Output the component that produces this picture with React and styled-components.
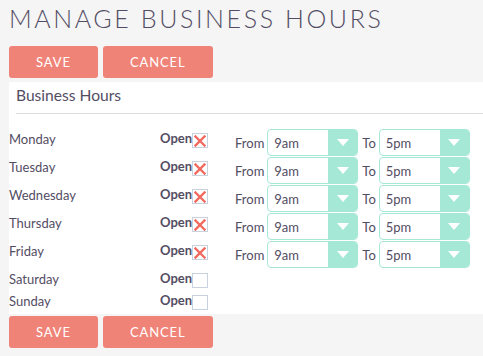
import React from 'react';
import styled, { createGlobalStyle } from 'styled-components';

const Global = createGlobalStyle`
  body {
    margin: 0;
    background: #f5f5f5;
    font-family: Lato, "Open Sans", sans-serif;
    color: #534d64;
  }
`

const Page = styled.div`
  padding: 3px 0 0 9px;
`

const Title = styled.h1`
  margin: 0 0 13px;
  font-size: 25px;
  line-height: 30px;
  font-weight: 300;
  letter-spacing: 2.6px;
  color: #534d64;
`

const Buttons = styled.div`
  display: flex;
  gap: 5px;
`

const Button = styled.button`
  height: 32px;
  padding: 0 27px;
  border: none;
  border-radius: 3px;
  background: #f08377;
  color: #fff;
  font-family: Lato, sans-serif;
  font-size: 13px;
  letter-spacing: 0.9px;
  cursor: pointer;
`

const Panel = styled.div`
  background: #fff;
  margin: 4px 0 2px;
  padding: 3px 0 1px;
`

const Heading = styled.h2`
  margin: 0 0 0 7px;
  padding-bottom: 8px;
  border-bottom: 1px solid #dcdcdc;
  font-size: 15.6px;
  line-height: 20px;
  font-weight: 400;
`

const Rows = styled.div`
  padding-top: 15px;
`

const Row = styled.div`
  display: flex;
  align-items: flex-start;
  height: ${p => (p.open ? 28 : 22)}px;
`

const Day = styled.div`
  width: 151px;
  font-size: 13px;
  line-height: 17px;
  padding-top: 2px;
`

const OpenCell = styled.div`
  width: 48px;
  display: flex;
  align-items: flex-start;
  font-size: 13px;
  line-height: 17px;
  font-weight: 700;
  padding-top: 1px;
`

const Check = styled.span`
  width: 15px;
  height: 13px;
  margin-top: 3px;
  border: 1px solid #c8d2de;
  background: #fff;
  display: flex;
  align-items: center;
  justify-content: center;
`

const Times = styled.div`
  margin-left: 27px;
  display: flex;
  align-items: center;
  height: 27px;
  font-size: 13px;
`

const Label = styled.span`
  margin-right: ${p => p.gap}px;
`

const Select = styled.div`
  width: 89px;
  height: 25px;
  border: 1px solid #a5e8d6;
  border-radius: 4px;
  display: flex;
  align-items: center;
  overflow: hidden;
  margin-right: ${p => p.gap || 0}px;
`

const Value = styled.span`
  flex: 1;
  padding-left: 6px;
  font-size: 13px;
`

const Arrow = styled.span`
  width: 29px;
  height: 100%;
  background: #a5e8d6;
  display: flex;
  align-items: center;
  justify-content: center;
`

const days = [
  { name: 'Monday', open: true },
  { name: 'Tuesday', open: true },
  { name: 'Wednesday', open: true },
  { name: 'Thursday', open: true },
  { name: 'Friday', open: true },
  { name: 'Saturday', open: false },
  { name: 'Sunday', open: false },
]

const Cross = () => (
  <svg width="12" height="12" viewBox="0 0 12 12">
    <path d="M1.5 1.5 L10.5 10.5 M10.5 1.5 L1.5 10.5" stroke="#f26a5f" strokeWidth="2.4" strokeLinecap="square" />
  </svg>
)

const Down = () => (
  <svg width="12" height="7" viewBox="0 0 12 7">
    <path d="M0 0 H12 L6 7 Z" fill="#fff" />
  </svg>
)

const TimeSelect = ({ value, gap }) => (
  <Select gap={gap}>
    <Value>{value}</Value>
    <Arrow><Down /></Arrow>
  </Select>
)

const App = () => (
  <Page>
    <Global />
    <Title>MANAGE BUSINESS HOURS</Title>
    <Buttons>
      <Button>SAVE</Button>
      <Button>CANCEL</Button>
    </Buttons>
    <Panel>
      <Heading>Business Hours</Heading>
      <Rows>
        {days.map(day => (
          <Row key={day.name} open={day.open}>
            <Day>{day.name}</Day>
            <OpenCell>
              Open
              <Check>{day.open && <Cross />}</Check>
            </OpenCell>
            {day.open && (
              <Times>
                <Label gap={3}>From</Label>
                <TimeSelect value="9am" gap={4} />
                <Label gap={3}>To</Label>
                <TimeSelect value="5pm" />
              </Times>
            )}
          </Row>
        ))}
      </Rows>
    </Panel>
    <Buttons>
      <Button>SAVE</Button>
      <Button>CANCEL</Button>
    </Buttons>
  </Page>
)

export default App;
